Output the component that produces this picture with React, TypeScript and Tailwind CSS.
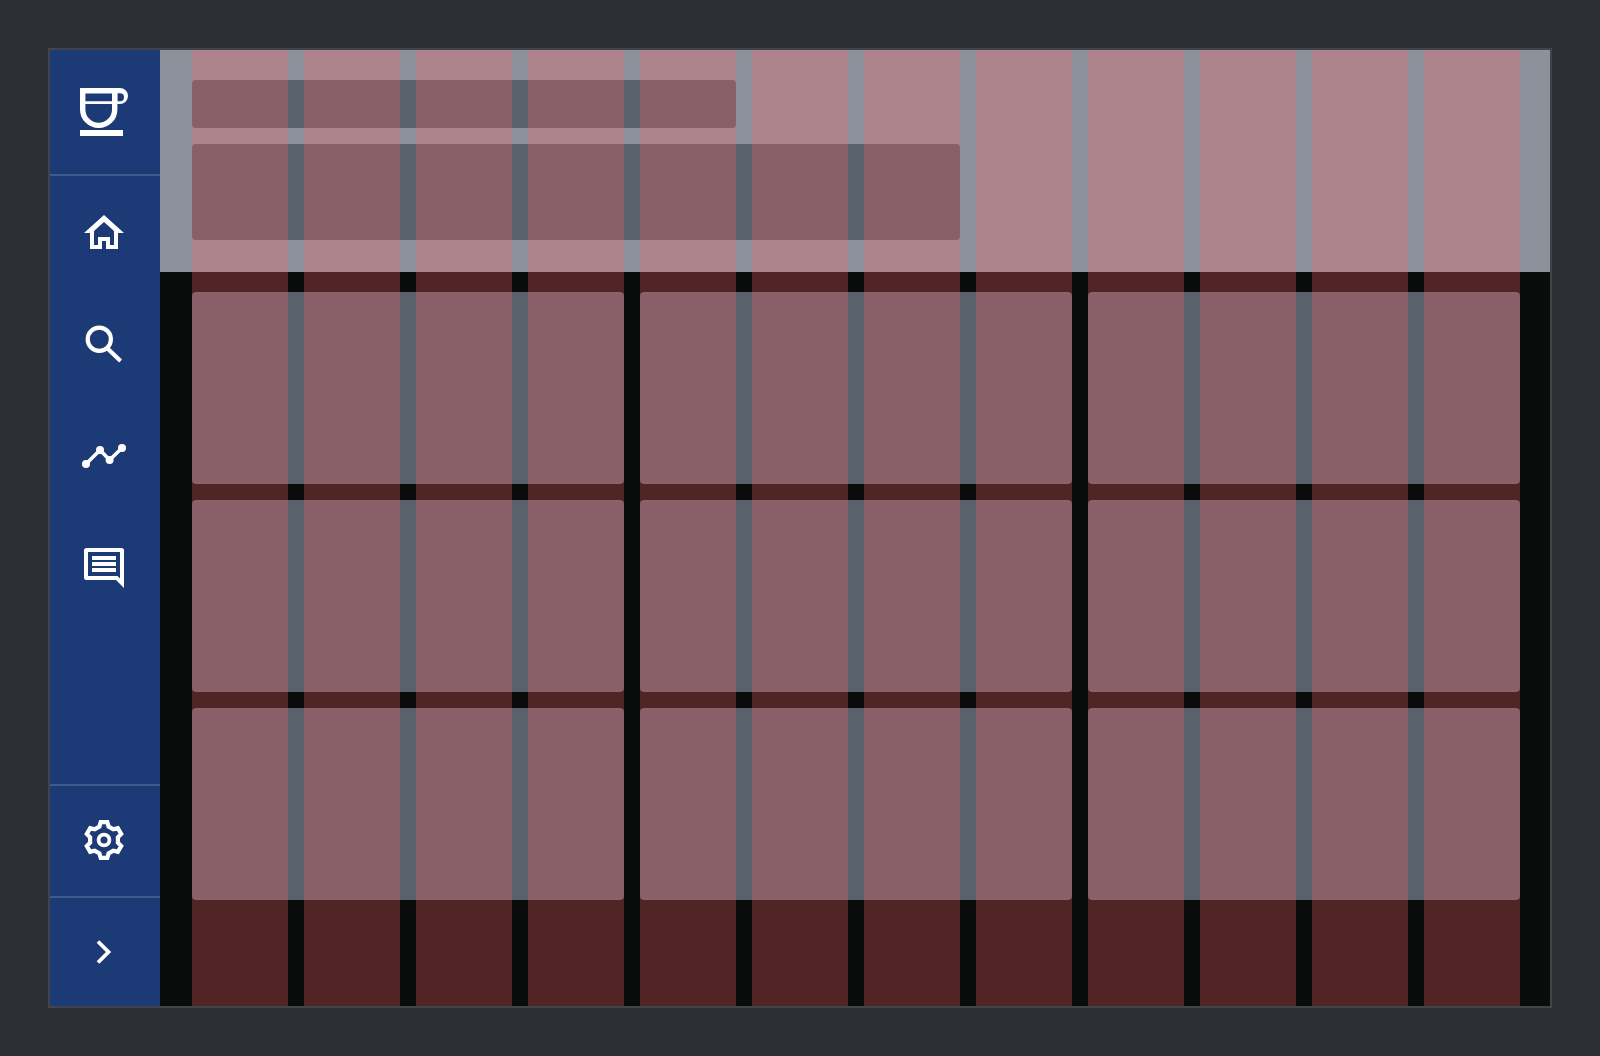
import React from 'react';

// six teeth, drawn as one closed outline
const gearPath = () => {
  const cx = 20;
  const cy = 20;
  let d = '';
  for (let i = 0; i < 6; i++) {
    const a = (Math.PI / 3) * i - Math.PI / 2;
    const pt = (r: number, off: number) => {
      const x = cx + r * Math.cos(a) - off * Math.sin(a);
      const y = cy + r * Math.sin(a) + off * Math.cos(a);
      return `${x.toFixed(2)} ${y.toFixed(2)}`;
    };
    d += `${i === 0 ? 'M' : 'L'}${pt(13.4, -4.6)} L${pt(17.9, -3.3)} L${pt(17.9, 3.3)} L${pt(13.4, 4.6)} `;
  }
  return d + 'Z';
};

const CoffeeIcon = () => (
  <svg width="48" height="48" viewBox="0 0 48 48" fill="white">
    <path fillRule="evenodd" d="M36 0H40a8 8 0 0 1 0 16H36ZM37.3 5.3V13.3H40a4 4 0 0 0 0-8Z" />
    <g fill="none" stroke="white">
      <path d="M0 2.7H37.3" strokeWidth="5.4" />
      <path d="M2.7 2.7V21.4a16 16 0 0 0 32 0V2.7" strokeWidth="5.4" />
      <path d="M2.7 14.7H37" strokeWidth="2.7" />
    </g>
    <rect x="0" y="42" width="43" height="6" />
  </svg>
);

const HomeIcon = () => (
  <svg width="40" height="34" viewBox="0 0 40 34" fill="white">
    <path
      fillRule="evenodd"
      d="M20 0L40 18H34V34H22V26H18V34H6V18H0ZM10 30H14V22H26V30H30V16L20 7L10 16Z"
    />
  </svg>
);

const SearchIcon = () => (
  <svg width="40" height="40" viewBox="0 0 40 40" fill="none" stroke="white">
    <circle cx="15.3" cy="15.3" r="11.6" strokeWidth="4.2" />
    <path d="M24 25L36.6 37" strokeWidth="4.2" />
  </svg>
);

const ChartIcon = () => (
  <svg width="48" height="24" viewBox="0 0 48 24" fill="white" stroke="white">
    <path d="M6 20L20 6L29.6 16L42 4" fill="none" strokeWidth="3.6" />
    <circle cx="6" cy="20" r="3" strokeWidth="2" />
    <circle cx="20" cy="6" r="3" strokeWidth="2" />
    <circle cx="29.6" cy="16" r="3" strokeWidth="2" />
    <circle cx="42" cy="4" r="3" strokeWidth="2" />
  </svg>
);

const CommentIcon = () => (
  <svg width="40" height="40" viewBox="0 0 40 40" fill="white">
    <path
      fillRule="evenodd"
      d="M2.5 0H37.5a2.5 2.5 0 0 1 2.5 2.5V40L32 32H2.5A2.5 2.5 0 0 1 0 29.5V2.5A2.5 2.5 0 0 1 2.5 0ZM4 4V28H33.5L36 30.5V4Z"
    />
    <rect x="8" y="8" width="24" height="4" />
    <rect x="8" y="14" width="24" height="4" />
    <rect x="8" y="20" width="24" height="4" />
  </svg>
);

const SettingsIcon = () => (
  <svg width="40" height="40" viewBox="0 0 40 40" fill="none" stroke="white" strokeWidth="4.2">
    <path d={gearPath()} />
    <circle cx="20" cy="20" r="5.4" strokeWidth="3.8" />
  </svg>
);

const ChevronIcon = () => (
  <svg width="24" height="24" viewBox="0 0 24 24" fill="none" stroke="white" strokeWidth="3.8">
    <path d="M6 1.5L16.5 12L6 22.5" />
  </svg>
);

const navIcons = [
  <HomeIcon key="home" />,
  <SearchIcon key="search" />,
  <ChartIcon key="chart" />,
  <CommentIcon key="comment" />,
];

const cards = Array.from({ length: 9 }, (_, i) => i);
const columns = Array.from({ length: 12 }, (_, i) => i);

export default function App() {
  return (
    <div className="w-[1600px] h-[1056px] p-12 bg-[#2c2f33]">
      <div className="flex w-full h-full border-2 border-[#41454a]">
        <aside className="flex flex-col w-[110px] shrink-0 bg-[#1c3b76]">
          <div className="flex items-center justify-center h-[126px] pr-0.5 border-b-2 border-[#415a8c]">
            <CoffeeIcon />
          </div>
          <nav className="flex-1">
            {navIcons.map((icon) => (
              <div key={icon.key} className="flex items-center justify-center h-[112px] pr-0.5">
                {icon}
              </div>
            ))}
          </nav>
          <div className="flex items-center justify-center h-[112px] pr-0.5 pb-0.5 border-t-2 border-[#415a8c]">
            <SettingsIcon />
          </div>
          <div className="flex items-center justify-center h-[110px] pr-0.5 border-t-2 border-[#415a8c]">
            <ChevronIcon />
          </div>
        </aside>

        <main className="relative flex-1 overflow-hidden bg-[#0a0c0b]">
          <header className="flex flex-col gap-4 h-[222px] pt-[30px] pl-8 pr-[30px] bg-[#8b929b]">
            <div className="w-[544px] h-12 rounded bg-[#59616a]" />
            <div className="w-[768px] h-24 rounded bg-[#59616a]" />
          </header>

          <div className="grid grid-cols-3 gap-4 pt-5 pl-8 pr-[30px]">
            {cards.map((card) => (
              <div key={card} className="h-48 rounded bg-[#59616a]" />
            ))}
          </div>

          {/* layout grid drawn over the page */}
          <div className="absolute inset-y-0 left-8 right-[30px] grid grid-cols-12 gap-4 pointer-events-none">
            {columns.map((col) => (
              <div key={col} className="bg-[rgba(250,97,100,0.3)]" />
            ))}
          </div>
        </main>
      </div>
    </div>
  );
}
